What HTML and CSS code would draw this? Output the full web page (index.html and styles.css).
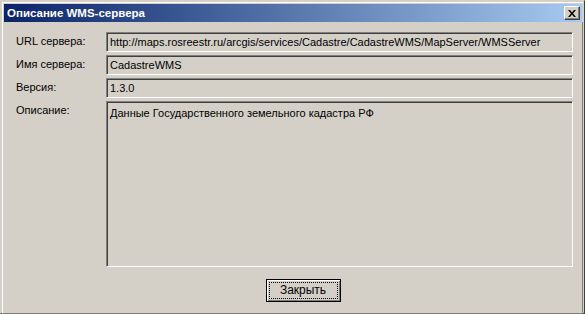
FILE: index.html
```html
<html>
<head>
<link rel="stylesheet" href="styles.css">
</head>
<body>
<div class="window">
  <div class="titlebar">
    <span class="title">Описание WMS-сервера</span>
    <span class="close">
      <svg width="8" height="7" viewBox="0 0 8 7"><path d="M0 0h2l2 2.5 2-2.5h2l-3 3.5 3 3.5h-2l-2-2.5-2 2.5h-2l3-3.5z" fill="#000"/></svg>
    </span>
  </div>
  <div class="content">
    <div class="label">URL сервера:</div>
    <div class="field">http://maps.rosreestr.ru/arcgis/services/Cadastre/CadastreWMS/MapServer/WMSServer</div>
    <div class="label">Имя сервера:</div>
    <div class="field">CadastreWMS</div>
    <div class="label">Версия:</div>
    <div class="field">1.3.0</div>
    <div class="label">Описание:</div>
    <div class="field memo">Данные Государственного земельного кадастра РФ</div>
  </div>
  <div class="buttons">
    <button class="btn"><span class="focus">Закрыть</span></button>
  </div>
</div>
</body>
</html>
```

FILE: styles.css
```css
body {margin: 0; background-color: #d4d0c8;}
.window {
  position: relative;
  width: 585px; height: 314px; box-sizing: border-box;
  background-color: #d4d0c8;
  border: 1px solid; border-color: #d4d0c8 #404040 #404040 #d4d0c8;
  font-family: "Liberation Sans", Arial, sans-serif; font-size: 11px; color: #000;
  display: flex; flex-direction: column;
}
.titlebar {
  margin: 1px 1px 0 1px; border-left: 1px solid #fff; border-top: 1px solid #fff;
  padding: 1px 1px 0 1px;
  height: 19px;
  display: flex; align-items: center;
  background: #d4d0c8;
}
.title {
  flex: 1; height: 18px; line-height: 18px; padding-left: 3px;
  background: linear-gradient(to right, #0a246a, #a6caf0);
  color: #fff; font-weight: bold; font-size: 11.5px;
}
/* caption button sits over the gradient */
.close {
  position: absolute; right: 4px; top: 5px;
  width: 14px; height: 12px; display: flex; align-items: center; justify-content: center;
  background: #d4d0c8;
  border: 1px solid; border-color: #fff #404040 #404040 #fff;
  box-shadow: inset -1px -1px 0 #808080;
}
.content {
  flex: 1; margin: 0 1px; border-left: 1px solid #fff;
  display: grid; grid-template-columns: 90px 467px; grid-template-rows: 20px 20px 20px 166px;
  row-gap: 3px; padding: 10px 0 0 13px;
  border-right: 1px solid #808080;
}
.label {padding-top: 3px;}
.field {
  box-sizing: border-box; border: 1px solid; border-color: #808080 #fff #fff #808080;
  box-shadow: inset 1px 1px 0 #404040;
  padding: 3px 0 0 3px; white-space: nowrap; overflow: hidden;
}
.memo {padding-top: 5px;}
.buttons {
  margin: 0 1px; border-left: 1px solid #fff; border-right: 1px solid #808080;
  border-bottom: 1px solid #808080;
  display: flex; justify-content: center; padding: 12px 0 11px 0;
}
.btn {
  width: 75px; height: 23px; padding: 2px; margin-left: 21px;
  background: #d4d0c8; font: inherit; color: #000;
  border: 1px solid #000;
  box-shadow: inset 1px 1px 0 #fff, inset -1px -1px 0 #808080;
}
.focus {display: block; border: 1px dotted #000; height: 15px; line-height: 15px; font-size: 12px;}
```
